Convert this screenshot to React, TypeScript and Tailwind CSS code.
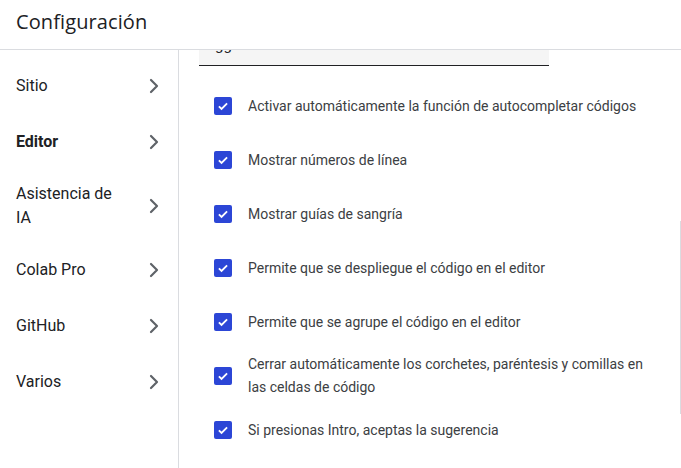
import { ChevronRight } from "lucide-react";

const sections = [
  { label: "Sitio" },
  { label: "Editor", active: true },
  { label: "Asistencia de IA" },
  { label: "Colab Pro" },
  { label: "GitHub" },
  { label: "Varios" },
];

const options = [
  "Activar automáticamente la función de autocompletar códigos",
  "Mostrar números de línea",
  "Mostrar guías de sangría",
  "Permite que se despliegue el código en el editor",
  "Permite que se agrupe el código en el editor",
  "Cerrar automáticamente los corchetes, paréntesis y comillas en las celdas de código",
  "Si presionas Intro, aceptas la sugerencia",
];

function Check() {
  return (
    <span className="flex h-[18px] w-[18px] shrink-0 items-center justify-center rounded-[2px] bg-[#2c46d6]">
      <svg viewBox="0 0 24 24" className="h-[14px] w-[14px]" fill="none" stroke="white" strokeWidth={3.2}>
        <path d="M5 12.5l4.5 4.5L19 7.5" />
      </svg>
    </span>
  );
}

export default function App() {
  return (
    <div className="relative flex h-[468px] w-[681px] flex-col overflow-hidden bg-white text-[#202124] [font-family:Roboto,'Liberation_Sans',sans-serif]">
      <header className="flex h-[50px] shrink-0 items-center border-b border-[#dadce0] pl-4 pb-[6px]">
        <h1 className="text-[20px] [font-family:'Open_Sans',Roboto,sans-serif] tracking-[0.1px] text-[#202124]">Configuración</h1>
      </header>

      <div className="flex min-h-0 flex-1">
        <nav className="flex w-[179px] shrink-0 flex-col border-r border-[#dadce0] pt-[8px]">
          {sections.map((s) => (
            <div key={s.label} className="flex min-h-[56px] items-center gap-4 py-3 pl-4 pr-3">
              <span className={`flex-1 text-[16px] leading-6 ${s.active ? "font-bold" : ""}`}>{s.label}</span>
              <ChevronRight className="h-6 w-6 shrink-0 text-[#5f6368]" strokeWidth={2.2} />
            </div>
          ))}
        </nav>

        <main className="flex-1 pl-5">
          <div className="h-[16px] w-[350px] overflow-hidden border-b border-[#202124] bg-[#f5f5f5] pl-4">
            <div className="-mt-[15px] text-[15px] leading-5 text-[#202124]">gg</div>
          </div>
          <div className="mt-[13px] flex flex-col pl-[15px]">
            {options.map((o) => (
              <label key={o} className="flex h-[54px] items-center gap-4">
                <Check />
                <span className="max-w-[400px] text-[14px] leading-[23px] text-[#3c4043]">{o}</span>
              </label>
            ))}
          </div>
        </main>
      </div>

      <div className="absolute right-0 top-[221px] h-[193px] w-px bg-[#dadce0]" />
    </div>
  );
}
